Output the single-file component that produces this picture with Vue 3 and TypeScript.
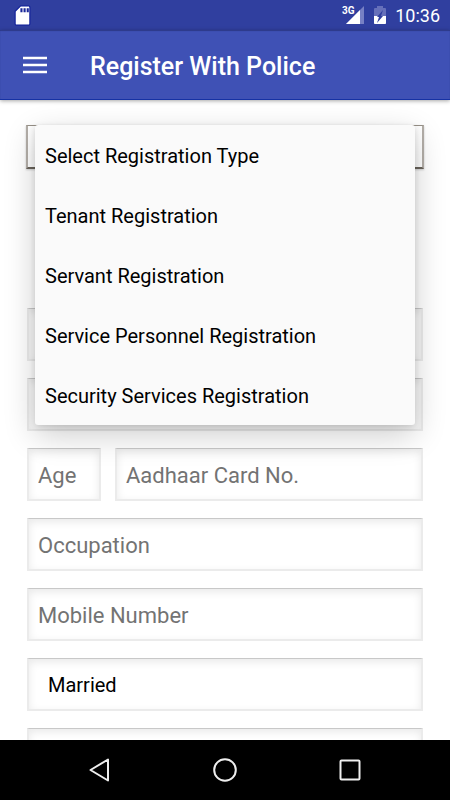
<script setup lang="ts">
import { ref } from 'vue'

const registrationTypes: string[] = [
  'Select Registration Type',
  'Tenant Registration',
  'Servant Registration',
  'Service Personnel Registration',
  'Security Services Registration',
]

const menuOpen = ref(true)
const registrationType = ref(registrationTypes[0])
const firstName = ref('')
const lastName = ref('')
const age = ref('')
const aadhaar = ref('')
const occupation = ref('')
const mobile = ref('')
const maritalStatus = ref('Married')
const address = ref('')

function choose(type: string): void {
  registrationType.value = type
  menuOpen.value = false
}
</script>

<template>
  <div class="screen">
    <div class="status">
      <svg class="sd" viewBox="0 0 16 20" aria-hidden="true">
        <path d="M6 1h8q1 0 1 1v16q0 1-1 1H2q-1 0-1-1V6z" fill="#fff" stroke="#0c1c98" stroke-width="1" />
        <path d="M6 3h2v4H6zM9 3h2v4H9zM12 3h2v4h-2z" fill="#1a2799" />
      </svg>
      <div class="status-right">
        <svg class="signal" viewBox="0 0 24 20" aria-hidden="true">
          <path d="M22 1v18H4z" fill="#7780c4" />
          <path d="M18 5v14H4z" fill="#fff" />
          <text x="0" y="9" class="network">3G</text>
        </svg>
        <svg class="battery" viewBox="0 0 14 20" aria-hidden="true">
          <path d="M4 1h6v2h2q1 0 1 1v15H1V4q0-1 1-1h2z" fill="#6670ba" />
          <path d="M1 11h12v7q0 1-1 1H2q-1 0-1-1z" fill="#fff" />
          <path d="M10 5l-6 7h2l-2 6 6-7H8z" fill="#303f9f" />
        </svg>
        <span class="clock">10:36</span>
      </div>
    </div>

    <header class="bar">
      <button class="menu-button" type="button" aria-label="Open navigation">
        <svg viewBox="0 0 24 18" aria-hidden="true">
          <path d="M0 2h24M0 9h24M0 16h24" stroke="#fff" stroke-width="2.5" />
        </svg>
      </button>
      <h1>Register With Police</h1>
    </header>

    <main class="content">
      <form class="form" @submit.prevent>
        <div class="picker">
          <button
            class="trigger"
            type="button"
            aria-label="Registration type"
            :aria-expanded="menuOpen"
            @click="menuOpen = !menuOpen"
          >
            <span v-if="!menuOpen">{{ registrationType }}</span>
          </button>
          <ul v-if="menuOpen" class="options">
            <li v-for="type in registrationTypes" :key="type">
              <button class="option" type="button" @click="choose(type)">{{ type }}</button>
            </li>
          </ul>
        </div>
        <input v-model="firstName" class="field" type="text" aria-label="First name" />
        <input v-model="lastName" class="field" type="text" aria-label="Last name" />
        <div class="row">
          <input v-model="age" class="field age" type="text" placeholder="Age" aria-label="Age" />
          <input v-model="aadhaar" class="field" type="text" placeholder="Aadhaar Card No." aria-label="Aadhaar Card No." />
        </div>
        <input v-model="occupation" class="field" type="text" placeholder="Occupation" aria-label="Occupation" />
        <input v-model="mobile" class="field" type="tel" placeholder="Mobile Number" aria-label="Mobile Number" />
        <select v-model="maritalStatus" class="field marital" aria-label="Marital status">
          <option>Married</option>
        </select>
        <input v-model="address" class="field" type="text" aria-label="Address" />
      </form>
    </main>

    <nav class="system">
      <button type="button" aria-label="Back">
        <svg viewBox="0 0 24 26" aria-hidden="true">
          <path d="M20 2.500v21L2.500 13z" />
        </svg>
      </button>
      <button type="button" aria-label="Home">
        <svg viewBox="0 0 24 26" aria-hidden="true">
          <circle cx="12" cy="13" r="10.800" />
        </svg>
      </button>
      <button type="button" aria-label="Recent apps">
        <svg viewBox="0 0 24 26" aria-hidden="true">
          <rect x="2.500" y="3.500" width="19" height="19" rx="1" />
        </svg>
      </button>
    </nav>
  </div>
</template>

<style>
body {
  background: #fff;
}
</style>

<style scoped>
.screen,
.screen * {
  box-sizing: border-box;
}

.screen {
  display: flex;
  flex-direction: column;
  height: 100vh;
  overflow: hidden;
  background: #fff;
  color: #000;
  font-family: Roboto, "Liberation Sans", sans-serif;
}

button,
input,
select {
  margin: 0;
  padding: 0;
  border: 0;
  border-radius: 0;
  background: none;
  color: inherit;
  font-family: inherit;
}

.status {
  display: flex;
  flex: none;
  align-items: center;
  justify-content: space-between;
  height: 30px;
  padding: 0 10px 0 14px;
  background: #303f9f;
  color: #fff;
}

.status-right {
  display: flex;
  align-items: center;
}

.sd {
  width: 17px;
  height: 21px;
}

.signal {
  width: 24px;
  height: 20px;
  margin-right: 7px;
  overflow: visible;
}

.network {
  fill: #fff;
  stroke: #303f9f;
  stroke-width: 2px;
  paint-order: stroke;
  font-size: 10px;
  font-weight: 700;
}

.battery {
  width: 14px;
  height: 20px;
  margin-right: 8px;
}

.clock {
  padding-top: 1px;
  font-size: 18px;
  font-weight: 400;
  line-height: 30px;
}

.bar {
  position: relative;
  z-index: 1;
  display: flex;
  flex: none;
  align-items: center;
  gap: 43px;
  height: 70px;
  padding: 0 23px;
  border-bottom: 1px solid #1632a4;
  background: #3f51b5;
  box-shadow: 0 1px 4px rgba(0, 0, 0, 0.35), inset 0 1px 1px #2d3988;
  color: #fff;
}

.menu-button {
  display: flex;
}

.menu-button svg {
  width: 24px;
  height: 18px;
}

h1 {
  margin: 0;
  padding-top: 4px;
  font-size: 25px;
  font-weight: 500;
  line-height: 32px;
}

.content {
  flex: 1;
  min-height: 0;
  overflow-x: hidden;
  overflow-y: auto;
  scrollbar-width: none;
}

.form {
  display: flex;
  flex-direction: column;
  gap: 17px;
  padding: 25px 26px;
}

.picker {
  position: relative;
  margin-bottom: 122px;
}

.trigger {
  display: block;
  width: 100%;
  height: 44px;
  padding: 0 18px;
  border: 2px solid #b3aea8;
  border-top: 1px solid #969087;
  border-bottom: 2px solid #6a645c;
  background: #fff;
  box-shadow: 0 1px 2px rgba(0, 0, 0, 0.2);
  font-size: 20px;
  text-align: left;
}

.options {
  position: absolute;
  z-index: 2;
  top: 0;
  right: 9px;
  left: 9px;
  margin: 0;
  padding: 0;
  border-radius: 3px;
  background: #fafafa;
  box-shadow: 0 10px 32px rgba(0, 0, 0, 0.2), 0 2px 6px rgba(0, 0, 0, 0.14);
  list-style: none;
}

.option {
  display: block;
  width: 100%;
  height: 60px;
  padding: 2px 10px 0;
  font-size: 20px;
  line-height: 24px;
  text-align: left;
}

.field {
  flex: none;
  width: calc(100% - 2px);
  min-width: 0;
  height: 53px;
  margin: 0 1px;
  padding: 2px 9px 0;
  border: 2px solid #ebebeb;
  border-top: 1px solid #c8c8c8;
  background: #fff;
  box-shadow: inset 0 3px 8px rgba(0, 0, 0, 0.09);
  font-size: 22px;
}

.field::placeholder {
  color: #737373;
  opacity: 1;
}

.row {
  display: flex;
  gap: 12px;
}

.row .field {
  flex: 1;
}

.row .age {
  flex: 0 0 74px;
}

.marital {
  appearance: none;
  padding: 2px 19px 0;
  font-size: 20px;
}

.system {
  display: flex;
  flex: none;
  align-items: center;
  justify-content: center;
  gap: 101px;
  height: 60px;
  background: #000;
}

.system button {
  display: flex;
}

.system svg {
  width: 24px;
  height: 26px;
  fill: none;
  stroke: #eee;
  stroke-width: 2;
  stroke-linejoin: round;
}
</style>
